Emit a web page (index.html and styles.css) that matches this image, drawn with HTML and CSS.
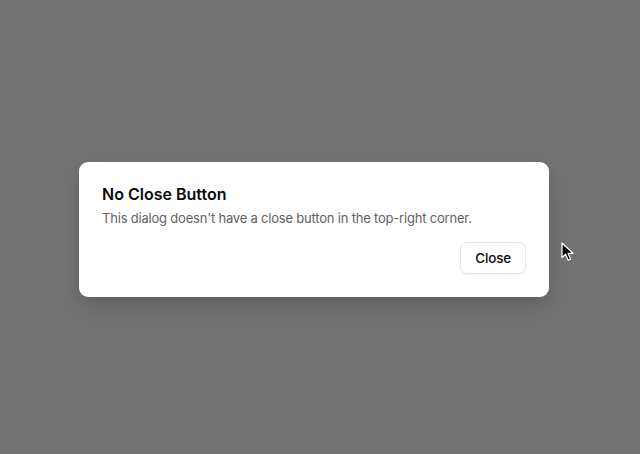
FILE: index.html
```html
<!DOCTYPE html>
<html>
<head>
<meta charset="utf-8">
<link rel="stylesheet" href="styles.css">
</head>
<body>
<div class="overlay">
  <div class="dialog" role="dialog">
    <h2 class="title">No Close Button</h2>
    <p class="desc">This dialog doesn't have a close button in the top-right corner.</p>
    <div class="footer">
      <button class="btn">Close</button>
    </div>
  </div>
</div>
<svg class="cursor" width="14" height="20" viewBox="0 0 14 20">
  <path d="M1 1 L1 15.5 L4.6 12.2 L7.2 18.2 L9.6 17.2 L7.1 11.3 L12 11.3 Z" fill="#000" stroke="#fff" stroke-width="1.2" stroke-linejoin="round"/>
</svg>
</body>
</html>
```
FILE: styles.css
```css
html, body {
  margin: 0;
  padding: 0;
  height: 100%;
}
body {
  background: #737373;
  font-family: Inter, "Noto Sans", sans-serif;
  overflow: hidden;
}
.overlay {
  padding: 162px 0 0 79px;
}
.dialog {
  width: 470px;
  box-sizing: border-box;
  background: #fff;
  border-radius: 9px;
  padding: 20px 23px 23px 23px;
  box-shadow: 0 10px 25px rgba(0,0,0,0.12), 0 4px 8px rgba(0,0,0,0.06);
}
.title {
  margin: 0;
  font-size: 16px;
  line-height: 24px;
  font-weight: 600;
  color: #0a0a0a;
}
.desc {
  margin: 2px 0 0 0;
  font-size: 13px;
  line-height: 20px;
  letter-spacing: -0.2px;
  color: #626262;
}
.footer {
  display: flex;
  justify-content: flex-end;
  margin-top: 14px;
}
.btn {
  font-family: inherit;
  font-size: 13.5px;
  letter-spacing: -0.2px;
  font-weight: 500;
  color: #0a0a0a;
  background: #fff;
  border: 1px solid #e5e5e5;
  border-radius: 7px;
  height: 32px;
  padding: 0 14px;
  box-shadow: 0 1px 2px rgba(0,0,0,0.05);
}
.cursor {
  position: absolute;
  left: 561px;
  top: 242px;
}
```
